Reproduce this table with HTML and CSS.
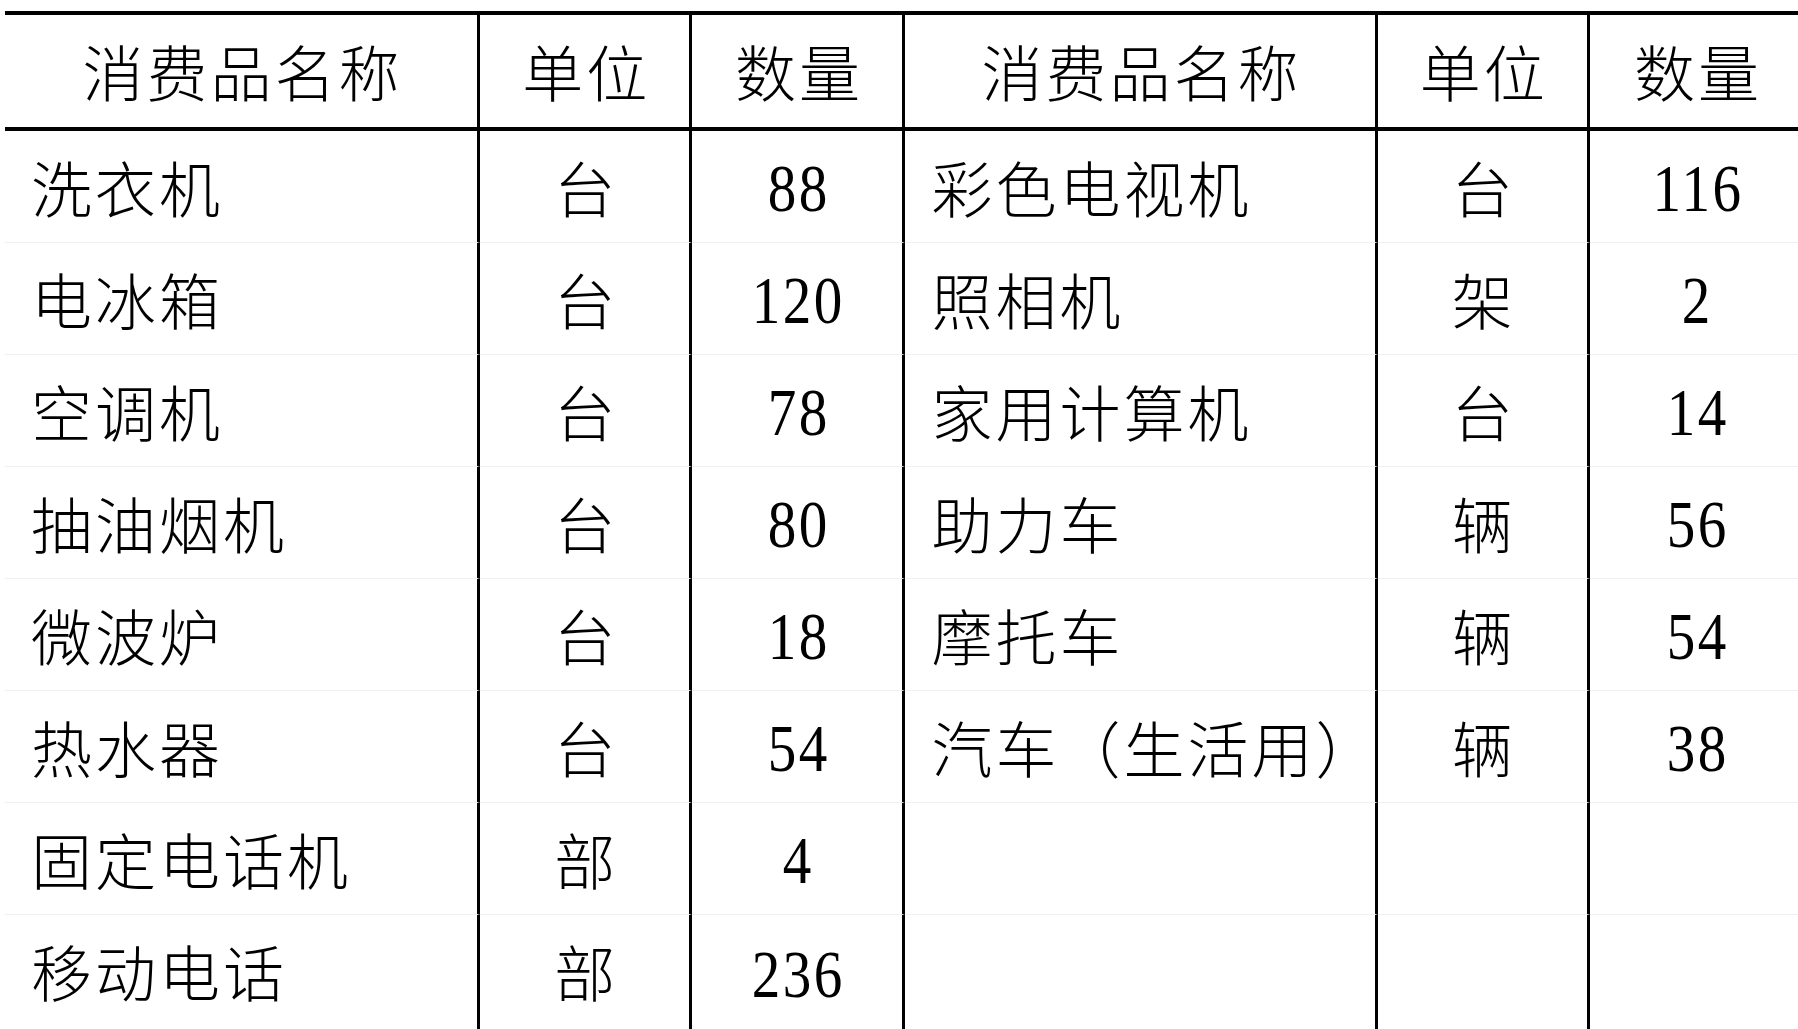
FILE: index.html
```html
<!DOCTYPE html>
<html lang="zh-CN">
<head>
<meta charset="utf-8">
<title>消费品拥有量</title>
<link rel="stylesheet" href="styles.css">
</head>
<body>
<table class="goods">
  <colgroup>
    <col class="c-name">
    <col class="c-unit">
    <col class="c-qty">
    <col class="c-name2">
    <col class="c-unit">
    <col class="c-qty-last">
  </colgroup>
  <thead>
    <tr>
      <th class="h">消费品名称</th>
      <th class="h">单位</th>
      <th class="h">数量</th>
      <th class="h">消费品名称</th>
      <th class="h">单位</th>
      <th class="h last">数量</th>
    </tr>
  </thead>
  <tbody>
    <tr>
      <td class="name">洗衣机</td><td class="unit">台</td><td class="qty"><span class="num">88</span></td>
      <td class="name">彩色电视机</td><td class="unit">台</td><td class="qty last"><span class="num">116</span></td>
    </tr>
    <tr>
      <td class="name">电冰箱</td><td class="unit">台</td><td class="qty"><span class="num">120</span></td>
      <td class="name">照相机</td><td class="unit">架</td><td class="qty last"><span class="num">2</span></td>
    </tr>
    <tr>
      <td class="name">空调机</td><td class="unit">台</td><td class="qty"><span class="num">78</span></td>
      <td class="name">家用计算机</td><td class="unit">台</td><td class="qty last"><span class="num">14</span></td>
    </tr>
    <tr>
      <td class="name">抽油烟机</td><td class="unit">台</td><td class="qty"><span class="num">80</span></td>
      <td class="name">助力车</td><td class="unit">辆</td><td class="qty last"><span class="num">56</span></td>
    </tr>
    <tr>
      <td class="name">微波炉</td><td class="unit">台</td><td class="qty"><span class="num">18</span></td>
      <td class="name">摩托车</td><td class="unit">辆</td><td class="qty last"><span class="num">54</span></td>
    </tr>
    <tr>
      <td class="name">热水器</td><td class="unit">台</td><td class="qty"><span class="num">54</span></td>
      <td class="name">汽车（生活用）</td><td class="unit">辆</td><td class="qty last"><span class="num">38</span></td>
    </tr>
    <tr>
      <td class="name">固定电话机</td><td class="unit">部</td><td class="qty"><span class="num">4</span></td>
      <td class="name"></td><td class="unit"></td><td class="qty last"></td>
    </tr>
    <tr class="final">
      <td class="name">移动电话</td><td class="unit">部</td><td class="qty"><span class="num">236</span></td>
      <td class="name"></td><td class="unit"></td><td class="qty last"></td>
    </tr>
  </tbody>
</table>
</body>
</html>
```
FILE: styles.css
```css
html, body {
  margin: 0;
  padding: 0;
  background: #ffffff;
  overflow: hidden;
}

body {
  width: 1798px;
  height: 1029px;
}

.goods {
  margin: 11px 0 0 5px;
  width: 1798px;
  table-layout: fixed;
  border-collapse: separate;
  border-spacing: 0;
  color: #000000;
  font-family: "Noto Sans CJK SC", "Noto Sans CJK TC", sans-serif;
  font-weight: 300;
  font-size: 61px;
}

.c-name { width: 475px; }
.c-unit { width: 212px; }
.c-qty { width: 213px; }
.c-name2 { width: 472px; }
.c-qty-last { width: 213px; }

.goods th,
.goods td {
  box-sizing: border-box;
  padding: 0;
  border-right: 3px solid #000000;
  vertical-align: middle;
  white-space: nowrap;
  overflow: visible;
  line-height: 64px;
}

.goods th.last,
.goods td.last {
  border-right: none;
}

.goods th {
  height: 120px;
  border-top: 4px solid #000000;
  border-bottom: 4px solid #000000;
  font-weight: 300;
  text-align: center;
  letter-spacing: 3px;
  text-indent: 3px;
}

.goods td {
  height: 112px;
  border-bottom: 1px solid #f0f0f0;
}

.goods .final td {
  height: 114px;
  border-bottom: none;
  vertical-align: top;
  padding-top: 24px;
}

.goods td.name {
  text-align: left;
  padding-left: 26px;
  letter-spacing: 3px;
}

.goods td.unit {
  text-align: center;
}

.goods td.qty {
  text-align: center;
}

.num {
  display: inline-block;
  font-family: "Liberation Serif", "Times New Roman", serif;
  font-weight: 400;
  font-size: 68px;
  letter-spacing: 3px;
  text-indent: 3px;
  transform: scaleX(0.84);
  line-height: 64px;
}
```
